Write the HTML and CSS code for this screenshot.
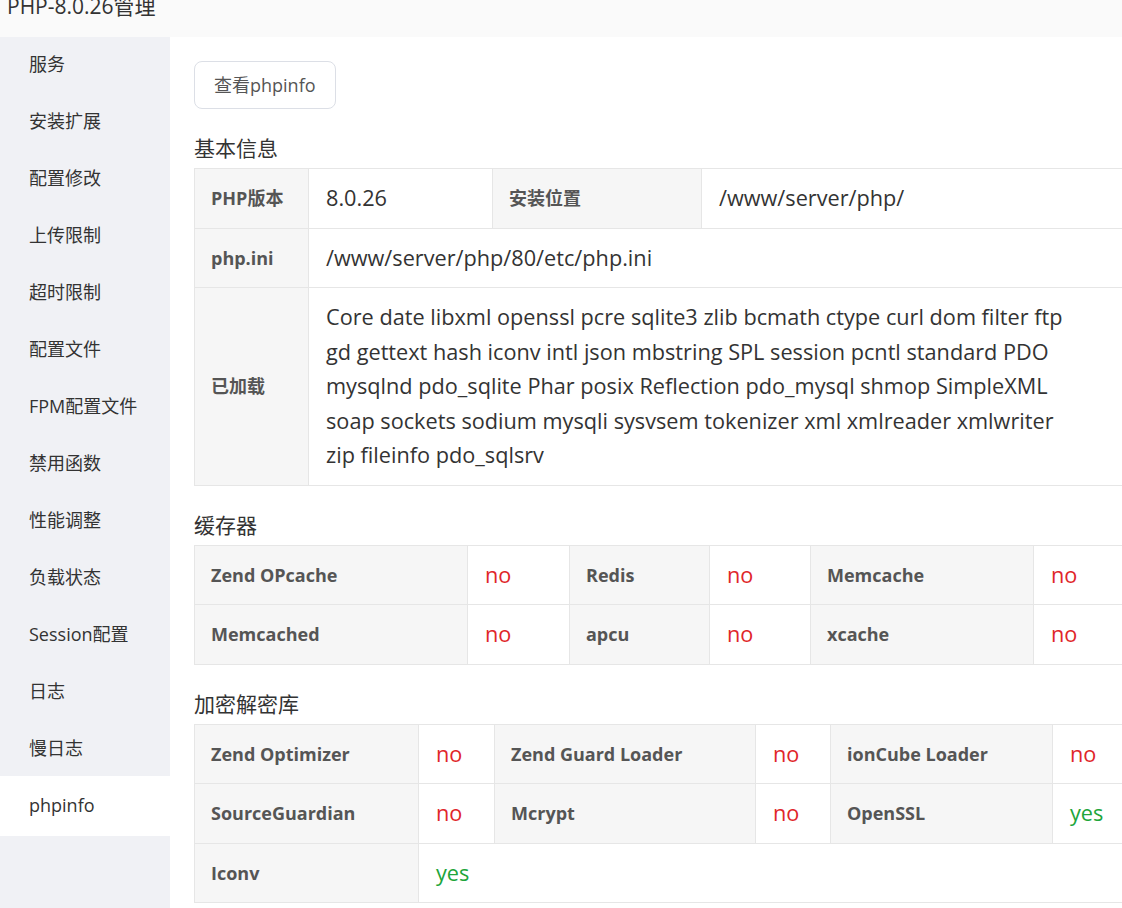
FILE: index.html
```html
<!DOCTYPE html>
<html lang="zh-CN">
<head>
    <meta charset="UTF-8">
    <title>PHP-8.0.26管理</title>
    <link rel="stylesheet" href="styles.css">
</head>
<body>
    <div class="header">
        <div class="header-title">PHP-8.0.26管理</div>
    </div>
    <div class="layout">
        <!-- Menu lateral -->
        <div class="menu">
            <div class="menu-item">服务</div>
            <div class="menu-item">安装扩展</div>
            <div class="menu-item">配置修改</div>
            <div class="menu-item">上传限制</div>
            <div class="menu-item">超时限制</div>
            <div class="menu-item">配置文件</div>
            <div class="menu-item">FPM配置文件</div>
            <div class="menu-item">禁用函数</div>
            <div class="menu-item">性能调整</div>
            <div class="menu-item">负载状态</div>
            <div class="menu-item">Session配置</div>
            <div class="menu-item">日志</div>
            <div class="menu-item">慢日志</div>
            <div class="menu-item active">phpinfo</div>
        </div>

        <div class="content">
            <button class="btn">查看phpinfo</button>

            <div class="section-title first">基本信息</div>
            <table class="info-table tb-base">
                <colgroup><col><col><col><col></colgroup>
                <tr>
                    <th>PHP版本</th>
                    <td>8.0.26</td>
                    <th>安装位置</th>
                    <td>/www/server/php/</td>
                </tr>
                <tr>
                    <th>php.ini</th>
                    <td colspan="3">/www/server/php/80/etc/php.ini</td>
                </tr>
                <tr>
                    <th>已加载</th>
                    <td colspan="3">
                        Core date libxml openssl pcre sqlite3 zlib bcmath ctype curl dom filter ftp<br>
                        gd gettext hash iconv intl json mbstring SPL session pcntl standard PDO<br>
                        mysqlnd pdo_sqlite Phar posix Reflection pdo_mysql shmop SimpleXML<br>
                        soap sockets sodium mysqli sysvsem tokenizer xml xmlreader xmlwriter<br>
                        zip fileinfo pdo_sqlsrv
                    </td>
                </tr>
            </table>

            <div class="section-title">缓存器</div>
            <table class="info-table tb-cache">
                <colgroup><col><col><col><col><col><col></colgroup>
                <tr>
                    <th>Zend OPcache</th><td class="no">no</td>
                    <th>Redis</th><td class="no">no</td>
                    <th>Memcache</th><td class="no">no</td>
                </tr>
                <tr>
                    <th>Memcached</th><td class="no">no</td>
                    <th>apcu</th><td class="no">no</td>
                    <th>xcache</th><td class="no">no</td>
                </tr>
            </table>

            <div class="section-title">加密解密库</div>
            <table class="info-table tb-crypt">
                <colgroup><col><col><col><col><col><col></colgroup>
                <tr>
                    <th>Zend Optimizer</th><td class="no">no</td>
                    <th>Zend Guard Loader</th><td class="no">no</td>
                    <th>ionCube Loader</th><td class="no">no</td>
                </tr>
                <tr>
                    <th>SourceGuardian</th><td class="no">no</td>
                    <th>Mcrypt</th><td class="no">no</td>
                    <th>OpenSSL</th><td class="yes">yes</td>
                </tr>
                <tr>
                    <th>Iconv</th><td class="yes" colspan="5">yes</td>
                </tr>
            </table>
        </div>
    </div>
</body>
</html>
```

FILE: styles.css
```css
body {
    margin: 0;
    height: 908px;
    overflow: hidden;
    background: #fff;
    color: #333;
    font-family: 'Open Sans', 'Noto Sans CJK SC', sans-serif;
}
.header {
    height: 37px;
    background: #fafafa;
    padding-left: 7px;
    overflow: hidden;
}
.header-title {
    font-size: 21px;
    line-height: 21px;
    margin-top: -4px;
    color: #333;
}
.layout {
    display: flex;
    height: 871px;
}
/* Menu */
.menu {
    width: 170px;
    flex-shrink: 0;
    background: #f0f1f5;
}
.menu-item {
    height: 57px;
    line-height: 55px;
    padding-left: 29px;
    font-size: 18px;
    color: #333;
}
.menu-item.active {
    background: #fff;
    height: 60px;
    line-height: 58px;
    margin-top: -2px;
}
/* Conteudo */
.content {
    padding: 24px 0 0 24px;
    width: 960px;
    flex-shrink: 0;
}
.btn {
    display: block;
    height: 48px;
    padding: 0 19px 2px 19px;
    border: 1px solid #dcdfe6;
    border-radius: 8px;
    background: #fff;
    color: #555;
    font-family: inherit;
    font-size: 18px;
}
.section-title {
    font-size: 21px;
    line-height: 30px;
    margin: 24px 0 5px 0;
    color: #333;
}
.info-table {
    width: 960px;
    table-layout: fixed;
    border-collapse: collapse;
}
.info-table th,
.info-table td {
    border: 1px solid #e6e6e6;
    padding: 12px 16px;
    line-height: 34.5px;
    text-align: left;
    vertical-align: middle;
    white-space: nowrap;
}
.info-table th {
    background: #f6f6f6;
    color: #555;
    font-size: 18px;
    font-weight: bold;
}
.info-table td {
    padding-left: 17px;
    font-size: 21.7px;
    color: #333;
}
.info-table td.no { color: #e0262b; }
.info-table td.yes { color: #20a53a; }

.tb-base col:nth-child(1) { width: 114px; }
.tb-base col:nth-child(2) { width: 184px; }
.tb-base col:nth-child(3) { width: 209px; }

.tb-cache col:nth-child(1) { width: 273px; }
.tb-cache col:nth-child(2) { width: 102px; }
.tb-cache col:nth-child(3) { width: 140px; }
.tb-cache col:nth-child(4) { width: 101px; }
.tb-cache col:nth-child(5) { width: 223px; }

.tb-crypt col:nth-child(1) { width: 224px; }
.tb-crypt col:nth-child(2) { width: 76px; }
.tb-crypt col:nth-child(3) { width: 261px; }
.tb-crypt col:nth-child(4) { width: 75px; }
.tb-crypt col:nth-child(5) { width: 222px; }
```
